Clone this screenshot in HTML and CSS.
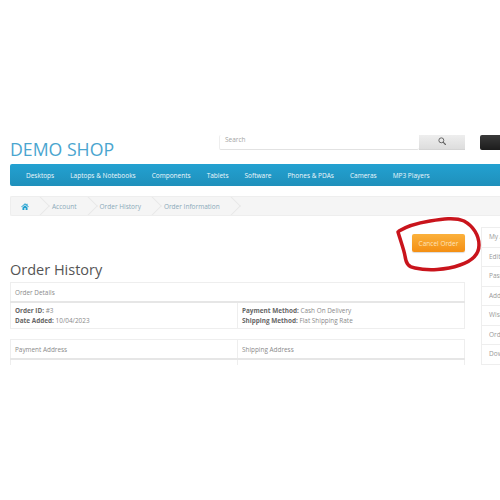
FILE: index.html
```html
<!DOCTYPE html>
<html lang="en">
<head>
    <meta charset="UTF-8">
    <title>Order History</title>
    <link rel="stylesheet" href="styles.css">
</head>
<body>
    <div class="page">
        <header class="top">
            <div class="logo">DEMO SHOP</div>
            <div class="search">
                <div class="search-input">Search</div>
                <div class="search-btn">
                    <svg width="8" height="8" viewBox="0 0 12 12"><circle cx="5" cy="5" r="3.7" fill="none" stroke="#666" stroke-width="1.500"/><path d="M8 8l3.200 3.200" stroke="#666" stroke-width="1.800" stroke-linecap="round"/></svg>
                </div>
            </div>
            <div class="cart"></div>
        </header>

        <nav class="menu">
            <a>Desktops</a>
            <a>Laptops &amp; Notebooks</a>
            <a>Components</a>
            <a>Tablets</a>
            <a>Software</a>
            <a>Phones &amp; PDAs</a>
            <a>Cameras</a>
            <a>MP3 Players</a>
        </nav>

        <ul class="breadcrumb">
            <li>
                <svg width="8" height="7" viewBox="0 0 12 11"><path d="M6 .5L0 5.800l.8.9L6 2.200l5.200 4.500.8-.9-2-1.800V1H8.500v1.400zM2 7v4h3V8h2v3h3V7L6 3.400z" fill="#23a1d1"/></svg>
            </li>
            <li>Account</li>
            <li>Order History</li>
            <li>Order Information</li>
        </ul>

        <div class="columns">
            <main class="content">
                <div class="actions"><button class="btn-cancel">Cancel Order</button></div>
                <h2>Order History</h2>
                <table class="info">
                    <tr><th colspan="2">Order Details</th></tr>
                    <tr>
                        <td><b>Order ID:</b> #3<br><b>Date Added:</b> 10/04/2023</td>
                        <td><b>Payment Method:</b> Cash On Delivery<br><b>Shipping Method:</b> Flat Shipping Rate</td>
                    </tr>
                </table>
                <table class="info">
                    <tr><th>Payment Address</th><th>Shipping Address</th></tr>
                    <tr><td></td><td></td></tr>
                </table>
            </main>
            <aside class="side">
                <a>My Account</a>
                <a>Edit Account</a>
                <a>Password</a>
                <a>Address Book</a>
                <a>Wish List</a>
                <a>Order History</a>
                <a>Downloads</a>
            </aside>
        </div>

        <svg class="scribble" width="500" height="500" viewBox="0 0 500 500">
            <path d="M398 232C401 242 404 250 405 256C406 263 408 267 415 268C428 271 446 270 460 265C472 261 479 254 479 245C479 235 473 226 464 221C455 217 442 219 430 221C418 223 407 226 399 231" fill="none" stroke="#c9141c" stroke-width="3.500" stroke-linecap="round"/>
        </svg>
    </div>
</body>
</html>
```

FILE: styles.css
```css
html, body {
    margin: 0;
    padding: 0;
    background-color: #fff;
}

body {
    font-family: 'Open Sans', sans-serif;
    font-size: 6.500px;
    color: #777;
    overflow: hidden;
}

.page {
    position: relative;
    width: 500px;
    height: 365px;
    padding: 133px 0 0 10px;
    box-sizing: border-box;
    overflow: hidden;
}

/* header */
.top {
    display: flex;
    align-items: flex-start;
    height: 31px;
}

.logo {
    width: 209px;
    margin-top: 2px;
    font-size: 17.700px;
    line-height: 28px;
    color: #4aa5cf;
}

.search {
    display: flex;
    width: 246px;
    height: 15px;
    margin-top: 2px;
}

.search-input {
    flex: 1;
    padding-left: 5px;
    line-height: 10px;
    color: #a5a5a5;
    border-left: 1px solid #eee;
    border-bottom: 1px solid #e2e2e2;
    border-radius: 2px;
}

.search-btn {
    display: flex;
    align-items: center;
    justify-content: center;
    width: 46px;
    padding-bottom: 2px;
    box-sizing: border-box;
    background: linear-gradient(#eee, #ddd);
    border-bottom: 1px solid #d4d4d4;
}

.cart {
    flex: 1;
    height: 15px;
    margin: 2px 0 0 15px;
    background: linear-gradient(#3a3a3a, #1c1c1c);
    border-radius: 2px 0 0 2px;
}

/* menu */
.menu {
    display: flex;
    align-items: center;
    gap: 16px;
    height: 22px;
    padding-left: 16px;
    background: linear-gradient(#23a1d1, #1f90bb);
    border-radius: 2px 0 0 2px;
}

.menu a {
    color: #eef7fb;
    font-size: 6.500px;
    white-space: nowrap;
}

/* breadcrumb */
.breadcrumb {
    display: flex;
    align-items: center;
    height: 20px;
    margin: 10px 0 0;
    padding: 0;
    list-style: none;
    background-color: #f5f5f5;
    border: 1px solid #eee;
    border-right: none;
    border-radius: 2px 0 0 2px;
    box-sizing: border-box;
    overflow: hidden;
}

.breadcrumb li {
    position: relative;
    display: flex;
    align-items: center;
    height: 18px;
    padding: 0 23px 0 0;
    font-size: 6.500px;
    color: #8aa9b9;
    white-space: nowrap;
}

.breadcrumb li:first-child {
    padding: 0 23px 0 10px;
}

.breadcrumb li::after {
    content: "";
    position: absolute;
    top: 2px;
    right: 5px;
    width: 13px;
    height: 13px;
    border-top: 1px solid #e8e8e8;
    border-right: 1px solid #e8e8e8;
    transform: rotate(45deg);
}

/* main */
.columns {
    display: flex;
    gap: 16px;
    margin-top: 10px;
}

.content {
    flex: none;
    width: 455px;
}

.actions {
    display: flex;
    justify-content: flex-end;
    margin-top: 8px;
}

.btn-cancel {
    width: 53px;
    height: 18px;
    padding: 0;
    border: none;
    border-radius: 2px;
    background: linear-gradient(#fbb13c, #f48f13);
    box-shadow: 0 1px 1px rgba(0, 0, 0, 0.15);
    color: #fde3bd;
    font-family: 'Open Sans', sans-serif;
    font-size: 6.500px;
}

h2 {
    margin: 8px 0 2px;
    font-size: 14.500px;
    line-height: 20px;
    font-weight: 400;
    color: #555;
}

.info {
    width: 100%;
    margin-bottom: 10px;
    border-collapse: collapse;
    table-layout: fixed;
    font-size: 6.400px;
}

.info th, .info td {
    padding: 0 4px;
    border: 1px solid #eee;
    text-align: left;
    font-weight: 400;
    color: #8a8a8a;
}

.info th {
    height: 18px;
    border-bottom: 2px solid #e6e6e6;
}

.info td {
    height: 25px;
    line-height: 9.500px;
}

.info b {
    color: #666;
    font-weight: 700;
}

/* side list */
.side {
    display: flex;
    flex: none;
    flex-direction: column;
    width: 60px;
    margin-top: 1px;
    border: 1px solid #eee;
    box-sizing: border-box;
}

.side a {
    height: 19.500px;
    padding-left: 7px;
    line-height: 18px;
    font-size: 6.500px;
    color: #999;
    border-bottom: 1px solid #eee;
    box-sizing: border-box;
    white-space: nowrap;
}

.scribble {
    position: absolute;
    top: 0;
    left: 0;
}
```
